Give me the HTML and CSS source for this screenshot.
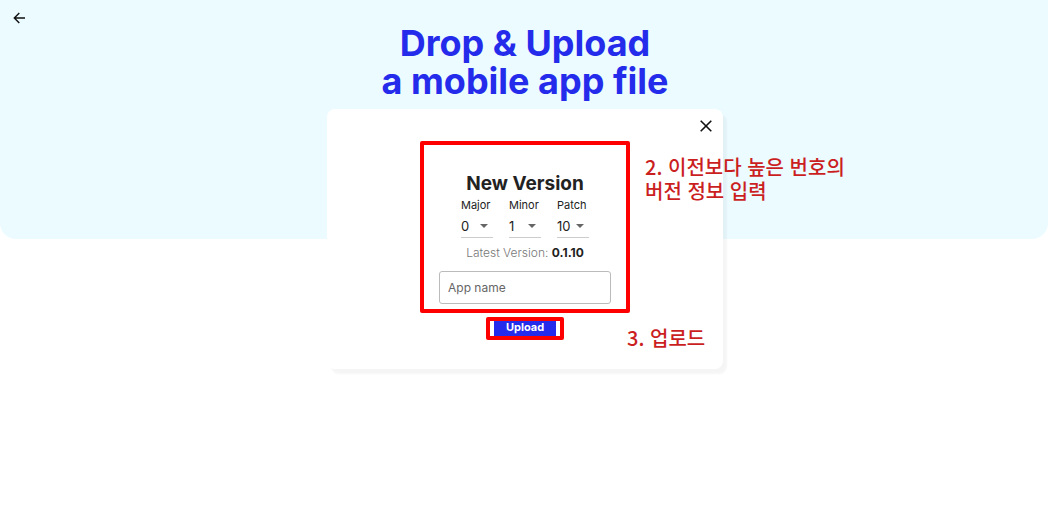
FILE: index.html
```html
<!DOCTYPE html>
<html lang="en">
<head>
<meta charset="utf-8">
<meta name="viewport" content="width=device-width, initial-scale=1">
<title>Drop &amp; Upload</title>
<link rel="stylesheet" href="styles.css">
</head>
<body>
<main class="page">
  <button class="icon-button back" type="button" aria-label="Back">
    <svg width="12" height="12" viewBox="0 0 12 12"><path d="M12 6H1.5M6.3 1L1.3 6l5 5" fill="none" stroke="currentColor" stroke-width="1.4"/></svg>
  </button>
  <h1 class="title">Drop &amp; Upload<br>a mobile app file</h1>
  <section class="card">
    <button class="icon-button close" type="button" aria-label="Close">
      <svg width="12" height="12" viewBox="0 0 12 12"><path d="M.7.7l10.6 10.6M11.3.7L.7 11.3" fill="none" stroke="currentColor" stroke-width="1.6"/></svg>
    </button>
    <form class="form">
      <div class="details">
        <h2 class="subtitle">New Version</h2>
        <div class="versions">
          <div class="field">
            <label class="field-label" for="major">Major</label>
            <div class="select-wrap"><select class="select" id="major"><option>0</option></select></div>
          </div>
          <div class="field">
            <label class="field-label" for="minor">Minor</label>
            <div class="select-wrap"><select class="select" id="minor"><option>1</option></select></div>
          </div>
          <div class="field">
            <label class="field-label" for="patch">Patch</label>
            <div class="select-wrap"><select class="select" id="patch"><option>10</option></select></div>
          </div>
        </div>
        <p class="latest">Latest Version: <strong class="latest-number">0.1.10</strong></p>
        <input class="app-name" type="text" placeholder="App name" aria-label="App name">
      </div>
      <div class="submit">
        <button class="upload" type="button">Upload</button>
      </div>
    </form>
    <p class="note note-version" lang="ko">2. 이전보다 높은 번호의<br>버전 정보 입력</p>
    <p class="note note-upload" lang="ko">3. 업로드</p>
  </section>
</main>
</body>
</html>
```
FILE: styles.css
```css
* { box-sizing: border-box; }

body {
  margin: 0;
  background: #fff;
  color: #222;
  font-family: Inter, "Noto Sans CJK KR", sans-serif;
}

.page {
  position: relative;
  display: flex;
  flex-direction: column;
  align-items: center;
  padding: 12px 0;
}

/* tinted band behind the heading and the top half of the card */
.page::before {
  content: "";
  position: absolute;
  inset: 0 2px auto 0;
  height: 239px;
  border-radius: 0 0 16px 16px;
  background: #ebfbff;
  z-index: -1;
}

.icon-button {
  display: flex;
  padding: 0;
  border: 0;
  background: none;
  color: #111;
}

.back {
  align-self: flex-start;
  margin-left: 13px;
}

.title {
  margin: 0;
  color: #242beb;
  font-size: 36px;
  font-weight: 700;
  line-height: 38px;
  text-align: center;
}

.card {
  position: relative;
  display: flex;
  flex-direction: column;
  width: 396px;
  max-width: 100%;
  margin-top: 9px;
  padding: 11px 11px 29px;
  border-radius: 8px;
  background: #fff;
  box-shadow: 4px 5px 2px rgba(0, 0, 0, .04);
}

.close { align-self: flex-end; }

.form {
  display: flex;
  flex-direction: column;
  align-items: center;
  gap: 4px;
  margin-top: 9px;
}

.details {
  display: flex;
  flex-direction: column;
  align-items: center;
  width: 210px;
  padding: 28px 15px 5px;
  border: 4px solid #f00;
  border-radius: 2px;
}

.subtitle {
  margin: 0;
  font-size: 19px;
  font-weight: 700;
  line-height: 22px;
}

.versions {
  display: flex;
  gap: 16px;
  margin-top: 2px;
}

.field { width: 32px; }

.field-label {
  display: block;
  font-size: 11px;
  line-height: 16px;
  white-space: nowrap;
}

.select-wrap {
  position: relative;
  margin-top: 2px;
}

.select-wrap::after {
  content: "";
  position: absolute;
  top: 9px;
  right: 5px;
  border: 4px solid transparent;
  border-top-color: #666;
  border-bottom: 0;
  pointer-events: none;
}

.select {
  appearance: none;
  display: block;
  width: 100%;
  height: 23px;
  padding: 0 0 1px;
  border: 0;
  border-bottom: 1px solid #ccc;
  background: none;
  color: #222;
  font: 13px/18px Inter, sans-serif;
}

.latest {
  margin: 6px 0 0;
  color: #777;
  font-size: 12px;
  font-weight: 300;
  line-height: 18px;
  white-space: nowrap;
}

.latest-number {
  color: #222;
  font-weight: 700;
}

.app-name {
  width: 100%;
  height: 33px;
  margin-top: 9px;
  padding: 0 8px;
  border: 1px solid #bbb;
  border-radius: 3px;
  background: #fff;
  color: #222;
  font: 12px/18px Inter, sans-serif;
}

.app-name::placeholder {
  color: #666;
  opacity: 1;
}

.submit {
  padding: 0 4px;
  border: 4px solid #f00;
  border-radius: 2px;
}

.upload {
  display: block;
  width: 62px;
  height: 15px;
  padding: 0 0 3px;
  border: 0;
  background: #242beb;
  color: #fff;
  font: 700 11px/12px Inter, sans-serif;
}

/* annotations laid over the card and its surroundings */
.note {
  position: absolute;
  margin: 0;
  color: #cb1f1f;
  font: 500 20px/24px "Noto Sans CJK KR", sans-serif;
  white-space: nowrap;
}

.note-version {
  top: 46px;
  left: 318px;
}

.note-upload {
  top: 217px;
  left: 300px;
}
```
